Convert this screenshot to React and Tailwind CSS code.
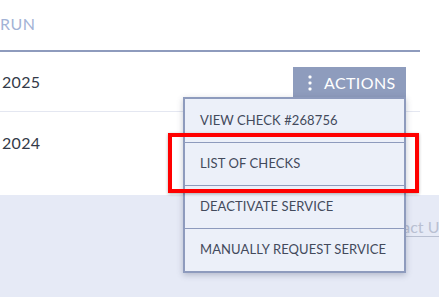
export default function App() {
  const items = ['VIEW CHECK #268756', 'LIST OF CHECKS', 'DEACTIVATE SERVICE', 'MANUALLY REQUEST SERVICE']

  return (
    <div className="relative flex h-[297px] w-[439px] flex-col overflow-hidden bg-white font-['Lato',sans-serif]">
      <div className="w-[420px] shrink-0">
        <div className="flex h-[52px] items-center border-b-2 border-[#8e9bbd] pb-[3px]">
          <span className="text-[16px] tracking-[0.5px] text-[#a3b3d6]">RUN</span>
        </div>
        <div className="flex h-[60px] items-center justify-between border-b border-[#e4e7f1] pl-[2px] pr-[14px]">
          <span className="text-[16px] tracking-[0.3px] text-[#333a48]">2025</span>
          <button className="mt-[2px] flex h-[31px] w-[113px] items-center gap-[12px] bg-[#8e9cbd] pl-[15px] text-[16px] tracking-[0.4px] text-white">
            <svg width="4" height="16" viewBox="0 0 4 16" className="fill-white">
              <rect x="0.5" y="0.5" width="3" height="3" rx="1" />
              <rect x="0.5" y="6.5" width="3" height="3" rx="1" />
              <rect x="0.5" y="12.5" width="3" height="3" rx="1" />
            </svg>
            ACTIONS
          </button>
        </div>
        <div className="h-[83px] pl-[2px] pt-[19px]">
          <span className="text-[16px] tracking-[0.3px] text-[#333a48]">2024</span>
        </div>
      </div>
      <div className="flex flex-1 justify-end bg-[#e6eaf6] pt-[20px]">
        <span className="-mr-[7px] text-[16px] text-[#b9c0d2] underline underline-offset-[3px]">Contact Us</span>
      </div>

      <div className="absolute left-[183px] top-[97px] w-[223px] border-2 border-[#8e9bbd] bg-[#ecf0f9] shadow-[0_2px_6px_rgba(60,70,100,0.3)]">
        {items.map((t, i) => (
          <div
            key={t}
            className={`flex h-[43px] items-center pl-[15px] text-[13px] tracking-[0.1px] text-[#434a5c] ${i > 0 ? 'border-t border-[#8e9bbd]' : ''}`}
          >
            {t}
          </div>
        ))}
      </div>

      <div className="absolute left-[168px] top-[133px] h-[60px] w-[251px] border-4 border-[#ff0000] shadow-[0_1px_3px_rgba(0,0,0,0.3)]" />
    </div>
  )
}
